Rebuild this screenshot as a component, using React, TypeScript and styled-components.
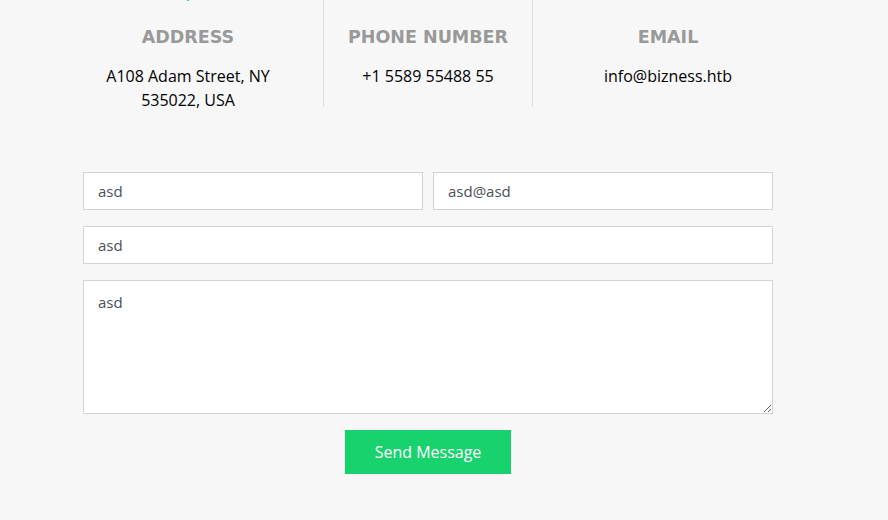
import React from "react";
import styled, { createGlobalStyle } from "styled-components";

const Global = createGlobalStyle`
  html, body { margin: 0; padding: 0; background: #f7f7f7; }
  body { font-family: "Open Sans", "Liberation Sans", sans-serif; color: #555; overflow: hidden; }
  * { box-sizing: border-box; }
`;

const Page = styled.div`
  width: 856px;
  height: 520px;
  overflow: hidden;
  display: flex;
  flex-direction: column;
  align-items: center;
`;

const InfoRow = styled.div`
  width: 750px;
  height: 154px;
  margin-top: -47px;
  display: grid;
  grid-template-columns: 270px 210px 270px;
  grid-template-rows: 154px;
  text-align: center;
`;

const InfoCol = styled.div<{ $divided?: boolean }>`
  display: flex;
  flex-direction: column;
  align-items: center;
  border-left: ${(p) => (p.$divided ? "1px solid #ddd" : "none")};
  border-right: ${(p) => (p.$divided ? "1px solid #ddd" : "none")};
`;

const IconSlot = styled.div`
  height: 48px;
  width: 48px;
  margin-bottom: 25px;
  color: #18d26e;
  display: flex;
  justify-content: center;
`;

const InfoTitle = styled.h3`
  margin: 0 0 16px;
  font-family: "DejaVu Sans", "Liberation Sans", sans-serif;
  font-weight: bold;
  font-size: 17.5px;
  line-height: 22px;
  color: #999;
  text-transform: uppercase;
`;

const InfoText = styled.p`
  margin: 0;
  font-size: 16px;
  line-height: 24px;
  color: #000;
  font-style: normal;
`;

const Form = styled.form`
  width: 690px;
  margin-top: 65px;
  display: flex;
  flex-direction: column;
  gap: 16px;
`;

const FieldRow = styled.div`
  display: grid;
  grid-template-columns: 1fr 1fr;
  gap: 10px;
`;

const Input = styled.input`
  width: 100%;
  height: 38px;
  padding: 0 14px;
  border: 1px solid #ced4da;
  border-radius: 0;
  background: #fff;
  font-family: "Open Sans", "Liberation Sans", sans-serif;
  font-size: 15px;
  color: #495057;
  outline: none;
`;

const TextArea = styled.textarea`
  width: 100%;
  height: 134px;
  padding: 10px 14px;
  border: 1px solid #ced4da;
  border-radius: 0;
  background: #fff;
  font-family: "Open Sans", "Liberation Sans", sans-serif;
  font-size: 15px;
  line-height: 22.5px;
  color: #495057;
  outline: none;
  display: block;
`;

const Actions = styled.div`
  display: flex;
  justify-content: center;
`;

const SendButton = styled.button`
  background: #18d26e;
  border: 0;
  border-radius: 0;
  padding: 10px 30px;
  color: #fff;
  font-family: "Open Sans", "Liberation Sans", sans-serif;
  font-size: 16px;
  line-height: 24px;
  cursor: pointer;
`;

const PinIcon = () => (
  <svg width="48" height="48" viewBox="0 0 48 48" fill="none" stroke="currentColor" strokeWidth="2">
    <path d="M24 47 C24 47 10 28 10 18 A14 14 0 0 1 38 18 C38 28 24 47 24 47 Z" />
    <circle cx="24" cy="18" r="5" />
  </svg>
);

const PhoneIcon = () => (
  <svg width="40" height="40" viewBox="0 0 40 40" fill="none" stroke="currentColor" strokeWidth="2">
    <path d="M10 4 L16 4 L19 12 L15 15 C17 20 20 23 25 25 L28 21 L36 24 L36 30 C36 32 34 34 32 34 C18 33 7 22 6 8 C6 6 8 4 10 4 Z" />
  </svg>
);

const MailIcon = () => (
  <svg width="44" height="36" viewBox="0 0 44 36" fill="none" stroke="currentColor" strokeWidth="2">
    <rect x="3" y="4" width="38" height="26" />
    <path d="M3 4 L22 20 L41 4" />
  </svg>
);

export default function App() {
  return (
    <>
      <Global />
      <Page>
        <InfoRow>
          <InfoCol>
            <IconSlot>
              <PinIcon />
            </IconSlot>
            <InfoTitle>Address</InfoTitle>
            <InfoText as="address">
              A108 Adam Street, NY
              <br />
              535022, USA
            </InfoText>
          </InfoCol>
          <InfoCol $divided>
            <IconSlot>
              <PhoneIcon />
            </IconSlot>
            <InfoTitle>Phone Number</InfoTitle>
            <InfoText>+1 5589 55488 55</InfoText>
          </InfoCol>
          <InfoCol>
            <IconSlot>
              <MailIcon />
            </IconSlot>
            <InfoTitle>Email</InfoTitle>
            <InfoText>info@bizness.htb</InfoText>
          </InfoCol>
        </InfoRow>
        <Form onSubmit={(e) => e.preventDefault()}>
          <FieldRow>
            <Input defaultValue="asd" />
            <Input defaultValue="asd@asd" />
          </FieldRow>
          <Input defaultValue="asd" />
          <TextArea defaultValue="asd" rows={5} />
          <Actions>
            <SendButton type="submit">Send Message</SendButton>
          </Actions>
        </Form>
      </Page>
    </>
  );
}
